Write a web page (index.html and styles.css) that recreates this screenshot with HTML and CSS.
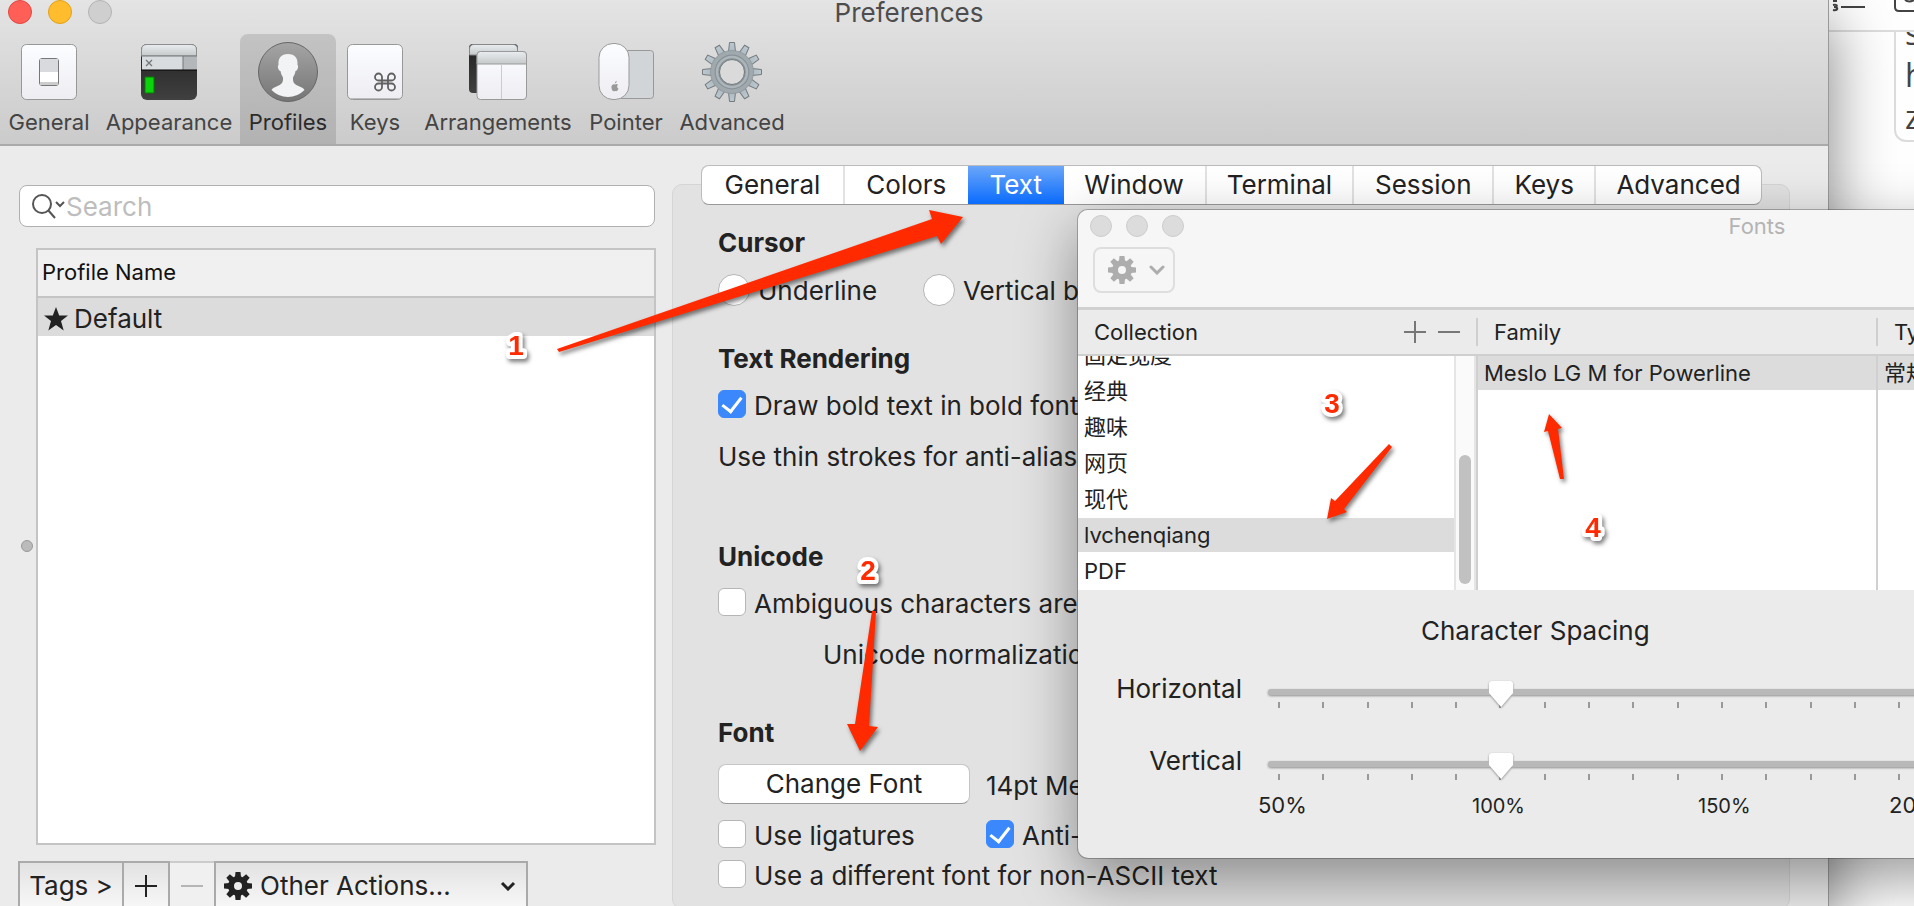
FILE: index.html
```html
<!DOCTYPE html>
<html lang="en">
<head>
<meta charset="utf-8">
<title>Preferences</title>
<link rel="stylesheet" href="styles.css">
</head>
<body>
<svg class="defs" width="0" height="0" aria-hidden="true">
  <defs>
    <symbol id="gear8" viewBox="-14 -14 28 28">
      <path fill-rule="evenodd" d="M0-10a10 10 0 1 0 0 20a10 10 0 1 0 0-20zM0-4a4 4 0 1 1 0 8a4 4 0 1 1 0-8z"/>
      <g id="teeth4"><path d="M-2.500-14h5l.5 5h-6zM-2.500 14h5l.5-5h-6zM-14-2.500v5l5 .5v-6zM14-2.500v5l-5 .5v-6z"/></g>
      <use href="#teeth4" transform="rotate(45)"/>
    </symbol>
    <linearGradient id="gPaper" x1="0" y1="0" x2="0" y2="1"><stop offset="0" stop-color="#fbfdff"/><stop offset="1" stop-color="#eeedf2"/></linearGradient>
    <linearGradient id="gBar" x1="0" y1="0" x2="0" y2="1"><stop offset="0" stop-color="#e9edef"/><stop offset="1" stop-color="#c5c9ca"/></linearGradient>
    <linearGradient id="gDark" x1="0" y1="0" x2="0" y2="1"><stop offset="0" stop-color="#222"/><stop offset="1" stop-color="#404040"/></linearGradient>
    <linearGradient id="gDisc" x1="0" y1="0" x2="0" y2="1"><stop offset="0" stop-color="#a5a5a5"/><stop offset="1" stop-color="#757575"/></linearGradient>
    <linearGradient id="gSteel" gradientUnits="userSpaceOnUse" x1="0" y1="-30" x2="0" y2="30"><stop offset="0" stop-color="#bccad1"/><stop offset=".5" stop-color="#929a9f"/><stop offset="1" stop-color="#77777a"/></linearGradient>
  </defs>
</svg>

<aside class="notes">
  <div class="notes-bar">
    <svg width="85" height="32" viewBox="0 0 85 32" fill="none" stroke="#444" stroke-width="2">
      <path d="M12 7h24M4 1h4M4 5c5-1 5 2 1 2c5 0 4 4-1 3"/>
      <path d="M66-2v9q0 4 4 4h18M76 0q4 3 9 0"/>
    </svg>
  </div>
  <div class="notes-box">s<br>h<br>z</div>
</aside>

<main class="prefs">
  <header class="toolbar">
    <div class="lights"><span class="light red"></span><span class="light yellow"></span><span class="light grey"></span></div>
    <h1 class="title">Preferences</h1>
    <nav class="tools">
      <button class="tool"><svg width="60" height="60" viewBox="0 0 60 60"><rect x="2.500" y="2.500" width="55" height="55" rx="5" fill="url(#gPaper)" stroke="#979797"/><rect x="20.500" y="16.500" width="19" height="27" rx="2.500" fill="#fff" stroke="#777"/><path d="M21 17h18v13H21z" fill="#d9dadd"/><path d="M21 40h18v3H21z" fill="#ccc"/></svg>General</button>
      <button class="tool"><svg width="60" height="60" viewBox="0 0 60 60"><rect x="2" y="2" width="56" height="56" rx="6" fill="url(#gDark)"/><path d="M2.500 14V8q0-5.500 5.500-5.500h44q5.500 0 5.500 5.500v6z" fill="url(#gBar)" stroke="#8d8d8d"/><path d="M3 14h41v14H3z" fill="#d8dcde"/><path d="M44 14h14v14H44z" fill="#b3b7ba"/><path d="M2 14h56M44 14v14" stroke="#777" fill="none"/><path d="M2 28h56" stroke="#000"/><path d="M7 18l6 6M13 18l-6 6" stroke="#777" stroke-width="1.300"/><path d="M6 35h9v16H6z" fill="#0bd30b" stroke="#087808"/></svg>Appearance</button>
      <button class="tool current"><svg width="60" height="60" viewBox="0 0 60 60"><circle cx="30" cy="30" r="29.500" fill="url(#gDisc)" stroke="#666"/><path d="M30 12c-7 0-10 4-9.500 11c-1.500 1 0 6 2 6c.5 3 1.500 4.500 2.500 6.500c.5 6-2.500 7-5.500 8.500c-3 1.400-5 2-6 4q7 7 16.500 7q9.500 0 16.500-7c-1-2-3-2.600-6-4c-3-1.500-6-2.500-5.500-8.500c1-2 2-3.500 2.500-6.500c2 0 3.500-5 2-6c.5-7-2.500-11-9.500-11z" fill="#f1f3f5"/></svg>Profiles</button>
      <button class="tool"><svg width="60" height="60" viewBox="0 0 60 60"><rect x="2.500" y="2.500" width="55" height="55" rx="5" fill="url(#gPaper)" stroke="#979797"/><path d="M5 56.500h50" stroke="#bbb"/><path transform="translate(29 29)" d="M14 8v8a3.500 3.500 0 1 0 3.500-3.500h-13a3.500 3.500 0 1 0 3.500 3.500v-10a3.500 3.500 0 1 0-3.500 3.500h13a3.500 3.500 0 1 0-3.500-3.500z" fill="none" stroke="#606060" stroke-width="1.800"/></svg>Keys</button>
      <button class="tool"><svg width="60" height="60" viewBox="0 0 60 60"><rect x="1" y="2" width="49" height="49" rx="4" fill="url(#gDark)"/><path d="M1.500 13V7q0-4.500 4.500-4.500h39q4.500 0 4.500 4.500v6z" fill="url(#gBar)" stroke="#888"/><rect x="9" y="9.500" width="49.500" height="48" rx="3.500" fill="url(#gPaper)" stroke="#999"/><path d="M9 22v-9q0-3.500 3.500-3.500h42.500q3.500 0 3.500 3.500v9z" fill="url(#gBar)" stroke="#999"/><path d="M33.500 23v34" stroke="#ccc"/></svg>Arrangements</button>
      <button class="tool"><svg width="60" height="60" viewBox="0 0 60 60"><rect x="20" y="8.500" width="37.500" height="48" rx="3" fill="#d2d5d7" stroke="#999"/><rect x="3" y="1.500" width="30" height="56" rx="14" fill="url(#gPaper)" stroke="#999"/><path d="M19 42.500c1-1 2.500-.7 3 .2c-1.500 1-1 3.300.5 3.800c-.7 2.300-1.700 3-3.500 2.500c-2 .8-3.300-.5-3.600-3.500c-.1-2.300 1.600-3.700 3.600-3zM18.700 41.500q.2-2 2.200-2.700q0 2.300-2.200 2.700z" fill="#999"/></svg>Pointer</button>
      <button class="tool"><svg width="60" height="60" viewBox="-30 -30 60 60"><g fill="url(#gSteel)" stroke="#747a7e"><path id="tooth" d="M-3.500-20l1-9.500h5l1 9.500z"/><use href="#tooth" transform="rotate(30)"/><use href="#tooth" transform="rotate(60)"/><use href="#tooth" transform="rotate(90)"/><use href="#tooth" transform="rotate(120)"/><use href="#tooth" transform="rotate(150)"/><use href="#tooth" transform="rotate(180)"/><use href="#tooth" transform="rotate(210)"/><use href="#tooth" transform="rotate(240)"/><use href="#tooth" transform="rotate(270)"/><use href="#tooth" transform="rotate(300)"/><use href="#tooth" transform="rotate(330)"/></g><circle r="17" fill="none" stroke="#a0a9ae" stroke-width="9"/><circle r="21.500" fill="none" stroke="#8d969b" stroke-width=".8"/><circle r="15" fill="none" stroke="#899297" stroke-width="5"/><circle r="15" fill="none" stroke="#abb5ba" stroke-width="2.500"/><circle r="12.500" fill="#dadada" stroke="#6f777b"/></svg>Advanced</button>
    </nav>
  </header>

  <div class="columns">
    <span class="grip"></span>
    <section class="sidebar">
      <label class="search">
        <svg width="34" height="26" viewBox="0 0 34 26" fill="none" stroke="#555" stroke-width="2"><circle cx="10" cy="11" r="9"/><path d="M16 17l7 8M24 9l4 4 4-4"/></svg>
        <input type="search" placeholder="Search" aria-label="Search">
      </label>
      <div class="profile-list">
        <table>
          <thead><tr><th>Profile Name</th></tr></thead>
          <tbody><tr><td><svg width="24" height="24" viewBox="0 0 24 24"><path fill="#222" d="M12 0l3.200 8.500H24l-7 5.600 2.700 9.400L12 18l-7.700 5.500L7 14.100 0 8.500h8.800z"/></svg>Default</td></tr></tbody>
        </table>
      </div>
      <div class="actions">
        <button class="tags">Tags &gt;</button>
        <button class="add" aria-label="Add profile"><svg width="24" height="24" viewBox="0 0 24 24"><path d="M12 1v22M1 12h22" stroke="#222" stroke-width="2"/></svg></button>
        <button class="remove" aria-label="Remove profile" disabled><svg width="24" height="24" viewBox="0 0 24 24"><path d="M1 12h22" stroke="#b5b5b5" stroke-width="2"/></svg></button>
        <label class="other">
          <svg width="28" height="28" fill="#222"><use href="#gear8"/></svg>
          <select aria-label="Other actions"><option>Other Actions...</option></select>
          <svg width="16" height="10" viewBox="0 0 16 10"><path d="M2 2l6 6 6-6" fill="none" stroke="#222" stroke-width="3"/></svg>
        </label>
      </div>
    </section>

    <section class="settings">
      <div class="tabs">
        <button>General</button><button>Colors</button><button class="on">Text</button><button>Window</button><button>Terminal</button><button>Session</button><button>Keys</button><button>Advanced</button>
      </div>
      <div class="panel">
        <h2>Cursor</h2>
        <div class="row two">
          <label><input type="radio" name="cursor">Underline</label>
          <label><input type="radio" name="cursor">Vertical bar</label>
        </div>
        <h2 class="after-radios">Text Rendering</h2>
        <label class="row"><input type="checkbox" checked>Draw bold text in bold font</label>
        <p>Use thin strokes for anti-aliased text</p>
        <h2 class="after-note">Unicode</h2>
        <label class="row"><input type="checkbox">Ambiguous characters are double-width</label>
        <p class="indent">Unicode normalization form:</p>
        <h2 class="before-font">Font</h2>
        <div class="font-row font-choice"><button class="push">Change Font</button><span>14pt Meslo LG M</span></div>
        <div class="row font-row"><label><input type="checkbox">Use ligatures</label><label><input type="checkbox" checked>Anti-aliased</label></div>
        <label class="row"><input type="checkbox">Use a different font for non-ASCII text</label>
      </div>
    </section>
  </div>
</main>

<section class="fonts" lang="zh">
  <header class="fonts-top">
    <div class="fonts-title"><div class="lights small"><span class="light"></span><span class="light"></span><span class="light"></span></div><h2>Fonts</h2></div>
    <button class="menu" aria-label="Font actions"><svg width="28" height="28" fill="#adadad"><use href="#gear8"/></svg><svg width="16" height="10" viewBox="0 0 16 10"><path d="M2 2l6 6 6-6" fill="none" stroke="#adadad" stroke-width="3" stroke-linecap="round"/></svg></button>
  </header>
  <div class="heads">
    <div class="head first">Collection <button aria-label="Add collection"><svg width="22" height="22"><path d="M11 0v22M0 11h22" stroke="#777" stroke-width="2"/></svg></button><button aria-label="Remove collection"><svg width="22" height="22"><path d="M0 11h22" stroke="#777" stroke-width="2"/></svg></button></div>
    <div class="head">Family</div>
    <div class="head">Typeface</div>
  </div>
  <div class="lists">
    <div class="collection">
      <ul><li>固定宽度</li><li>经典</li><li>趣味</li><li>网页</li><li>现代</li><li class="sel">lvchenqiang</li><li>PDF</li></ul>
      <div class="scroll"><span></span></div>
    </div>
    <ul class="family"><li class="sel">Meslo LG M for Powerline</li></ul>
    <ul class="face"><li class="sel">常规体</li></ul>
  </div>
  <div class="spacing">
    <h3>Character Spacing</h3>
    <label for="h">Horizontal</label>
    <div class="slider"><input id="h" type="range" min="50" max="250" value="100"><div class="ticks"><i></i><i></i><i></i><i></i><i></i><i></i><i></i><i></i><i></i><i></i><i></i><i></i><i></i><i></i><i></i><i></i><i></i><i></i><i></i><i></i><i></i></div></div>
    <label for="v">Vertical</label>
    <div class="slider"><input id="v" type="range" min="50" max="250" value="100"><div class="ticks"><i></i><i></i><i></i><i></i><i></i><i></i><i></i><i></i><i></i><i></i><i></i><i></i><i></i><i></i><i></i><i></i><i></i><i></i><i></i><i></i><i></i></div></div>
    <div class="scale"><span>50%</span><span class="tight">100%</span><span class="tight">150%</span><span>200%</span></div>
  </div>
</section>

<svg class="marks" width="1914" height="906" viewBox="0 0 1914 906">
  <g fill="#ff2a00">
    <path d="M557 349L932 219 929 210 963 217 941 244 937 236 559 352z"/>
    <path d="M872 611H876L869 726 878 727 860 751 847 724 855 724z"/>
    <path d="M1389 444L1392 447 1344 509 1347 512 1327 519 1331 498 1335 501z"/>
    <path d="M1560 479H1564L1558 429 1562 428 1549 414 1544 432 1548 431z"/>
  </g>
  <g class="nums"><text x="516" y="355">1</text><text x="868" y="580">2</text><text x="1332" y="413">3</text><text x="1593" y="537">4</text></g>
</svg>
</body>
</html>
```
FILE: styles.css
```css
* { box-sizing: border-box; }
body {
  margin: 0;
  height: 100vh;
  overflow: hidden;
  position: relative;
  background: #fff;
  color: #222;
  font: 26px/32px Inter, "Noto Sans CJK SC", sans-serif;
}
h1, h2, h3, p, ul { margin: 0; padding: 0; font-size: inherit; font-weight: 400; }
ul { list-style: none; }
button, input, select { font: inherit; color: inherit; margin: 0; padding: 0; }
button, select { background: none; border: 0; border-radius: 0; }
svg { display: block; flex: none; }
.defs { position: absolute; }

/* document window behind */
.notes { position: absolute; top: 0; right: 0; width: 85px; height: 100vh; overflow: hidden; background: #fff; }
.notes-bar { height: 32px; border-bottom: 2px solid #ddd; }
.notes-box {
  margin-left: 65px;
  width: 200px;
  height: 110px;
  padding: 0 0 2px 9px;
  display: flex;
  flex-direction: column;
  justify-content: flex-end;
  overflow: hidden;
  border: 2px solid #ddd;
  border-top: 0;
  border-radius: 0 0 12px 12px;
  font: 32px/42px "Open Sans", sans-serif;
  color: #444;
}

/* preferences window */
.prefs {
  position: relative;
  margin-right: 85px;
  background: #ebebeb;
  border-right: 1px solid #999;
  box-shadow: 0 20px 60px rgba(0, 0, 0, .5);
}
.toolbar {
  display: grid;
  grid-template-columns: 1fr auto 1fr;
  height: 146px;
  grid-template-rows: 34px 1fr;
  background: linear-gradient(#e4e4e4, #cbcbcb);
  border-bottom: 2px solid #aaa;
}
.lights { display: flex; gap: 16px; padding-left: 8px; }
.light { width: 24px; height: 24px; border-radius: 50%; background: #cfcfcf; border: 1px solid #b3b3b3; }
.light.red { background: #ff5f57; border-color: #e2463f; }
.light.yellow { background: #ffbd2e; border-color: #e1a116; }
.title { padding-right: 10px; line-height: 26px; color: #4d4d4d; }
.tools { grid-column: 1 / -1; display: grid; grid-template-columns: 98px 142px 96px 78px 168px 88px 124px; }
.tool {
  display: flex;
  flex-direction: column;
  align-items: center;
  gap: 6px;
  padding-top: 8px;
  font-size: 22px;
  line-height: 28px;
  color: #444;
  white-space: nowrap;
}
.tool.current { background: rgba(0, 0, 0, .12); border-radius: 8px 8px 0 0; color: #2b2b2b; }
.columns { position: relative; display: grid; grid-template-columns: 656px minmax(0, 1fr); gap: 16px; }
.grip { position: absolute; left: 21px; top: 394px; width: 12px; height: 12px; border-radius: 50%; background: #bbb; border: 1px solid #999; }

.sidebar { display: flex; flex-direction: column; padding: 39px 0 0 18px; }
.search {
  display: flex;
  align-items: center;
  height: 42px;
  margin: 0 1px;
  padding-left: 12px;
  background: #fff;
  border: 1px solid #b0b0b0;
  border-radius: 8px;
}
.search input { flex: 1; padding-top: 2px; border: 0; outline: 0; background: none; appearance: none; }
.search input::placeholder { color: #bdbdbd; opacity: 1; }
.profile-list { flex: 1; margin: 21px 0 16px 18px; background: #fff; border: 2px solid #c4c4c4; }
table { width: 100%; border-collapse: collapse; }
th { height: 47px; padding: 0 4px 2px; background: #f0f0f0; border-bottom: 2px solid #c4c4c4; text-align: left; font-size: 22px; font-weight: 400; color: #111; }
td { display: flex; align-items: center; gap: 6px; height: 38px; padding: 4px 6px 0; background: #dcdcdc; }
.actions { display: flex; height: 48px; }
.actions button, .other { border: 2px solid #aaa; border-bottom: 0; background: linear-gradient(#e2e2e2, #f8f8f8); }
.actions .tags { width: 106px; }
.actions .add { width: 48px; margin-left: -2px; display: grid; place-items: center; }
.actions .remove { width: 44px; border-color: #ccc; border-left: 0; border-right: 0; background: #f0f0f0; display: grid; place-items: center; }
.other { display: flex; align-items: center; gap: 8px; width: 314px; padding: 0 10px 0 8px; }
.other select { flex: 1; appearance: none; outline: 0; }

.settings { padding: 19px 38px 0 0; }
.tabs {
  position: relative;
  display: grid;
  grid-template-columns: 143fr 123fr 96fr 143fr 148fr 140fr 102fr 165fr;
  height: 40px;
  margin: 0 28px -21px 29px;
  background: #fff;
  border: 1px solid #bbb;
  border-bottom-color: #999;
  border-radius: 8px;
  overflow: hidden;
}
.tabs button { border-right: 2px solid #e2e2e2; }
.tabs button:last-child, .tabs .on, .tabs button:nth-child(2) { border-right: 0; }
.tabs .on { color: #fff; background: linear-gradient(#6ba6fa, #0a6cfd); }
.panel {
  padding: 42px 45px 16px;
  background: #e2e2e2;
  border: 1px solid #d5d5d5;
  border-radius: 10px;
  white-space: nowrap;
}
.panel h2 { font-weight: 700; margin-bottom: 15px; }
.row, .row label { display: flex; gap: 8px; }
.row label { width: 205px; }
.row.two { gap: 0; line-height: 34px; }
.panel .after-radios { margin-top: 35px; }
.panel p { margin-top: 19px; }
.panel .after-note { margin-top: 68px; }
.panel .indent { padding-left: 105px; }
.panel .before-font { margin-top: 46px; }
.font-row { gap: 16px; margin-bottom: 8px; }
.font-row > label:first-child { width: 252px; }
.font-choice { display: flex; height: 40px; margin-bottom: 16px; line-height: 44px; }
.push { width: 252px; height: 40px; line-height: 32px; background: #fff; border: 1px solid #c5c5c5; border-bottom-color: #999; border-radius: 8px; }
input[type="checkbox"], input[type="radio"] { appearance: none; flex: none; background: #fff; border: 1px solid #b5b5b5; }
input[type="checkbox"] { width: 28px; height: 28px; border-radius: 6px; }
input[type="radio"] { width: 32px; height: 32px; border-radius: 50%; }
input[type="checkbox"]:checked { display: grid; place-items: center; background: #3b88fd; border-color: #3b88fd; }
input[type="checkbox"]:checked::before { content: ""; width: 9px; height: 16px; border: solid #fff; border-width: 0 3px 3px 0; transform: rotate(38deg); margin-bottom: 4px; }

/* fonts window */
.fonts {
  position: absolute;
  left: 1078px;
  right: -522px;
  top: 210px;
  background: #ebebeb;
  border-radius: 10px;
  box-shadow: 0 0 0 1px rgba(0, 0, 0, .25), 0 20px 60px rgba(0, 0, 0, .4);
  font-size: 22px;
  line-height: 36px;
  overflow: hidden;
}
.fonts-top { height: 100px; background: #f6f6f6; border-bottom: 3px solid #d0d0d0; }
.fonts-title { display: grid; grid-template-columns: 1fr auto 1fr; height: 37px; }
.fonts-title h2 { line-height: 32px; color: #b3b3b3; }
.small { gap: 14px; padding: 5px 0 0 12px; }
.small .light { width: 22px; height: 22px; background: #dcdcdc; border-color: #ccc; }
.menu { display: flex; align-items: center; gap: 13px; width: 82px; height: 46px; margin-left: 15px; padding-left: 13px; border: 2px solid #dedede; border-radius: 8px; }
.heads, .lists { display: grid; grid-template-columns: 398px 400px 1fr; }
.heads { height: 46px; align-items: center; border-bottom: 2px solid #cfcfcf; }
.head { height: 28px; line-height: 28px; padding-left: 16px; border-left: 2px solid #cfcfcf; }
.head.first { display: flex; gap: 12px; align-items: center; padding: 0 16px; border: 0; }
.head.first button:first-of-type { margin-left: auto; }
.lists { height: 234px; background: #fff; }
.collection { display: flex; min-height: 0; }
.collection ul { flex: 1; display: flex; flex-direction: column; justify-content: flex-end; overflow: hidden; }
li { height: 36px; line-height: 34px; padding-left: 6px; flex: none; }
.sel { background: #dcdcdc; }
.collection .sel { border-bottom: 2px solid #fff; }
.family .sel, .face .sel { height: 34px; }
.scroll { width: 22px; padding: 99px 3px 6px; border: solid #e5e5e5; border-width: 0 2px; background: #fafafa; display: flex; }
.scroll span { flex: 1; border-radius: 6px; background: #c1c1c1; }
.family, .face { border-left: 2px solid #d0d0d0; }
.spacing { display: grid; grid-template-columns: 164px 908px; column-gap: 26px; height: 268px; padding-top: 25px; align-content: start; font-size: 26px; line-height: 32px; }
.spacing h3 { grid-column: 1 / -1; padding-left: 343px; height: 58px; }
.spacing label { text-align: right; }
.slider { height: 72px; }
.slider input { display: block; appearance: none; width: 100%; height: 28px; margin-top: 5px; background: none; filter: drop-shadow(0 1px 1px rgba(0, 0, 0, .4)); }
.slider input::-webkit-slider-runnable-track { height: 6px; border-radius: 3px; background: #b8b8b8; }
.slider input::-webkit-slider-thumb { appearance: none; width: 24px; height: 26px; margin-top: -8px; background: #fff; clip-path: polygon(2px 0, 22px 0, 24px 2px, 24px 12px, 12px 26px, 0 12px, 0 2px); }
.ticks { display: flex; justify-content: space-between; margin: -4px 10px 0; }
.ticks i { width: 2px; height: 6px; background: #999; }
.scale { grid-column: 2; display: grid; grid-template-columns: 214px 226px 191px 1fr; align-items: baseline; margin: -28px 0 0 -10px; font-size: 22px; }
.scale .tight { font-size: 20px; }

/* callouts */
.marks { position: absolute; left: 0; top: 0; pointer-events: none; filter: drop-shadow(2px 3px 2px rgba(0, 0, 0, .5)); }
.nums { font: 700 28px "Liberation Sans", Arial, sans-serif; text-anchor: middle; fill: #ff2a00; stroke: #fff; stroke-width: 8px; stroke-linejoin: round; paint-order: stroke; }
```
